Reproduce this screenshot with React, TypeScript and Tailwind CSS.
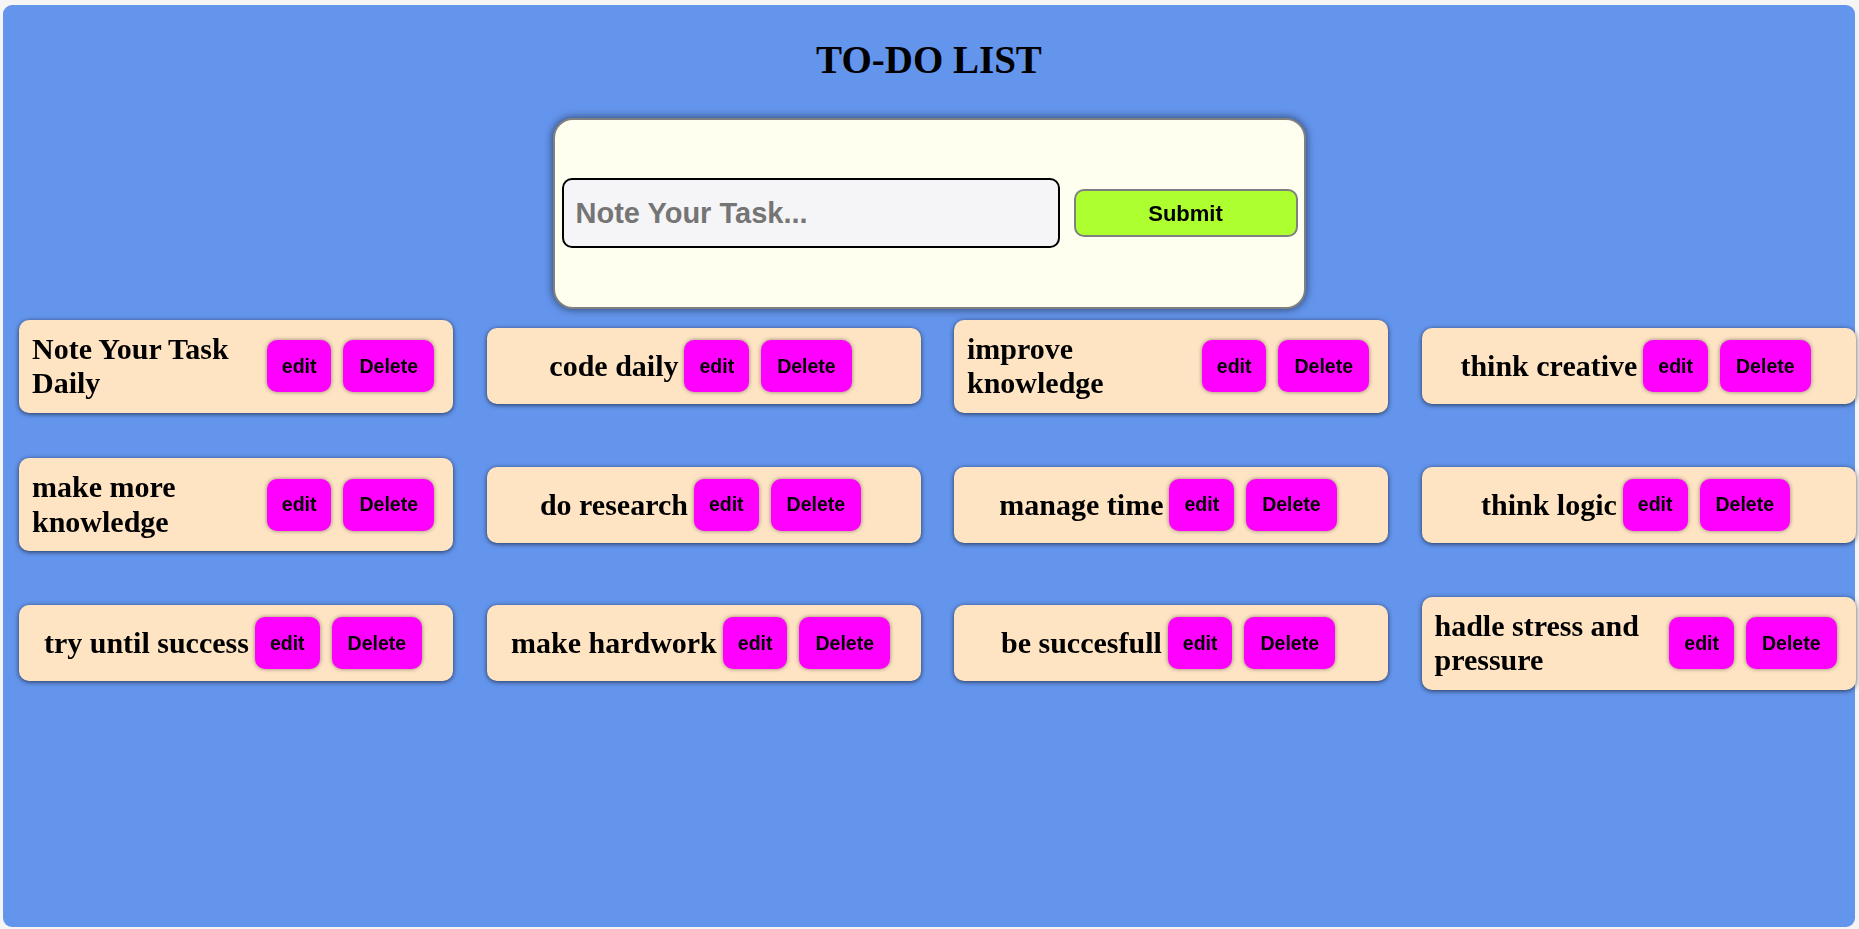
import { useState } from 'react';

const initialTasks = [
    'Note Your Task Daily',
    'code daily',
    'improve knowledge',
    'think creative',
    'make more knowledge',
    'do research',
    'manage time',
    'think logic',
    'try until success',
    'make hardwork',
    'be succesfull',
    'hadle stress and pressure',
];

const TaskCard = ({ text, onDelete }: { text: string; onDelete: () => void }) => {
    return (
        <div className="flex items-center justify-center w-[434px] px-[13px] py-3 bg-[#FFE4C4] rounded-[10px] shadow-[0_1px_5px_rgba(0,0,0,0.65)]">
            <h3 className="font-['Liberation_Serif',serif] font-bold text-[30px] leading-[1.15] text-black">
                {text}
            </h3>
            <button className="shrink-0 mx-[6px] h-[52px] px-[15px] bg-[#FF00FF] rounded-[10px] shadow-[0_0_4px_rgba(0,0,0,0.45)] font-['Liberation_Sans',Arial,sans-serif] font-bold text-[19.5px] text-black">
                edit
            </button>
            <button
                onClick={onDelete}
                className="shrink-0 mx-[6px] h-[52px] px-[16px] bg-[#FF00FF] rounded-[10px] shadow-[0_0_4px_rgba(0,0,0,0.45)] font-['Liberation_Sans',Arial,sans-serif] font-bold text-[19.5px] text-black"
            >
                Delete
            </button>
        </div>
    );
};

export default function App() {
    const [tasks, setTasks] = useState(initialTasks);
    const [value, setValue] = useState('');

    const handleSubmit = (e: React.FormEvent) => {
        e.preventDefault();
        if (!value.trim()) return;
        setTasks([...tasks, value.trim()]);
        setValue('');
    };

    return (
        <div className="w-full h-[929px] bg-[#f5f5f5] pt-[5px] pl-[3px] pr-[4px] pb-[2px]">
            <div className="h-[922px] bg-[#6495ED] rounded-[9px] pt-[33px]">
                <h1 className="text-center font-['Liberation_Serif',serif] font-bold text-[39px] leading-[1.15] text-black">
                    TO-DO LIST
                </h1>

                <form
                    onSubmit={handleSubmit}
                    className="mx-auto mt-[35px] w-[753px] h-[191px] flex items-center pl-[7px] pr-[6px] gap-[14px] bg-[#FFFFF0] border-2 border-[#808080] rounded-[20px] shadow-[0_0_10px_rgba(0,0,0,0.6)]"
                >
                    <input
                        autoFocus
                        value={value}
                        onChange={(e) => setValue(e.target.value)}
                        placeholder="Note Your Task..."
                        className="w-[498px] h-[70px] pl-[12px] bg-[#F5F5F7] border-2 border-black rounded-[10px] outline-none font-['Liberation_Sans',Arial,sans-serif] font-bold text-[29px] text-black placeholder:text-[#757575]"
                    />
                    <button
                        type="submit"
                        className="w-[224px] h-[48px] bg-[#ADFF2F] border-2 border-[#808080] rounded-[10px] font-['Liberation_Sans',Arial,sans-serif] font-bold text-[22px] text-black"
                    >
                        Submit
                    </button>
                </form>

                <div className="ml-[16px] mt-[11px] grid grid-cols-[repeat(4,434px)] gap-x-[33.5px] gap-y-[45.5px] items-center">
                    {tasks.map((task, i) => (
                        <TaskCard
                            key={i}
                            text={task}
                            onDelete={() => setTasks(tasks.filter((_, j) => j !== i))}
                        />
                    ))}
                </div>
            </div>
        </div>
    );
}
